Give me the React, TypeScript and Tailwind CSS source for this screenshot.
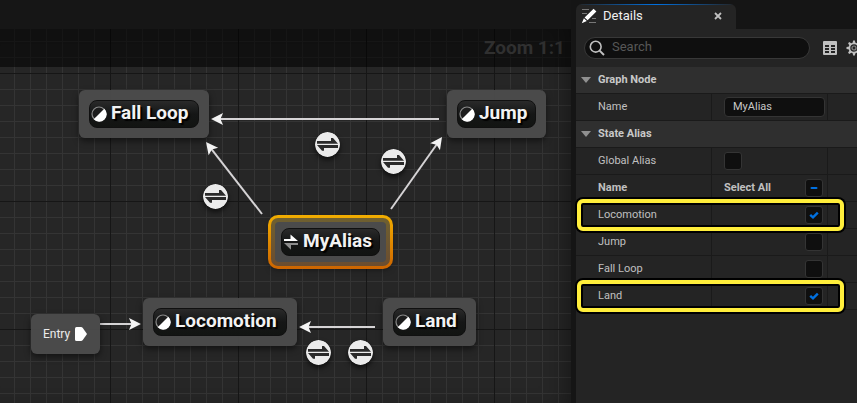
import type { ReactNode } from "react";

const gridStyle =
  "bg-[linear-gradient(to_right,#161616_1px,transparent_1px),linear-gradient(to_bottom,#161616_1px,transparent_1px),linear-gradient(to_right,#343434_1px,transparent_1px),linear-gradient(to_bottom,#343434_1px,transparent_1px)] bg-[size:128px_128px,128px_128px,16px_16px,16px_16px] bg-[position:110px_0px,0px_44px,14px_0px,0px_12px]";

function StateIcon() {
  return (
    <svg className="size-4 shrink-0" viewBox="0 0 16 16" aria-hidden="true">
      <circle cx="8" cy="8" r="7" fill="#1c1c1c" stroke="#8b8b8b" strokeWidth="1.2" />
      <path d="M13.3 2.7A7.5 7.5 0 1 1 2.7 13.3Z" fill="#fff" />
    </svg>
  );
}

function AliasIcon() {
  return (
    <svg className="size-4 shrink-0" viewBox="0 0 16 16" aria-hidden="true">
      <path d="M1 5H7.5V0.5L15 7H1Z" fill="#fff" />
      <path d="M15 9V11H8V15.7L1 9Z" fill="#8d8d8d" />
    </svg>
  );
}

function StateNode({
  title,
  className,
  icon = <StateIcon />,
  selected = false,
}: {
  title: string;
  className: string;
  icon?: ReactNode;
  selected?: boolean;
}) {
  return (
    <div className={`absolute h-12 rounded-md bg-[#4c4c4c]/95 p-[10px] shadow-[0_3px_6px_rgba(0,0,0,0.5)] ${className}`}>
      {selected && (
        <div className="absolute -inset-[3px] rounded-[10px] bg-linear-to-b from-[#f2ae00] to-[#cc6400] p-[3px]">
          <div className="size-full rounded-[7px] bg-linear-to-b from-[#6f6030] to-[#6b4d30] p-1">
            <div className="size-full rounded-[4px] bg-[#4b4b4b]" />
          </div>
        </div>
      )}
      <div className="relative flex h-7 items-center gap-1 rounded-lg border border-[#101010] bg-linear-to-b from-[#2a2a2a] via-[#151616] to-[#121412] pl-px">
        {icon}
        <span className="-mt-[2px] text-[19px] leading-6 font-bold whitespace-nowrap text-[#f2f2f2] [text-shadow:2px_2px_1px_#000]">
          {title}
        </span>
      </div>
    </div>
  );
}

const links = [
  { from: [439, 90], to: [211, 90] },
  { from: [262, 185], to: [206, 113] },
  { from: [391, 180], to: [442, 108] },
  { from: [100, 295], to: [141, 295] },
  { from: [375, 298], to: [299, 298] },
];

function Links() {
  return (
    <svg className="pointer-events-none absolute inset-0 size-full" aria-hidden="true">
      {links.map(({ from, to }, i) => {
        const dx = to[0] - from[0];
        const dy = to[1] - from[1];
        const length = Math.hypot(dx, dy);
        const angle = (Math.atan2(dy, dx) * 180) / Math.PI;
        return (
          <g key={i} transform={`translate(${to[0]} ${to[1]}) rotate(${angle})`}>
            <path d={`M${-length} 0H-8`} stroke="#d5d3d5" strokeWidth="2" />
            <path d="M0 0L-12 -6L-9.5 0L-12 6Z" fill="#f4f4f4" />
          </g>
        );
      })}
    </svg>
  );
}

function Transition({ className }: { className: string }) {
  return (
    <svg
      className={`absolute size-[25px] rounded-full shadow-[0_3px_5px_rgba(0,0,0,0.6)] ${className}`}
      viewBox="0 0 25 25"
      role="img"
      aria-label="Transition"
    >
      <circle cx="12.5" cy="12.5" r="12.5" fill="#ebebeb" />
      <path d="M2 9H16V6H18L23 11.8H2Z" fill="#2a2a2a" />
      <path d="M2 13H23V16H9V18.7H7L2 13Z" fill="#2a2a2a" />
    </svg>
  );
}

function Graph() {
  return (
    <main className={`relative min-h-0 flex-1 overflow-hidden bg-[#262626] ${gridStyle}`}>
      <div className="flex h-[38px] items-center justify-end bg-black/55 pr-[6px]">
        <span className="text-[19px] leading-6 font-bold text-[#303030]">Zoom 1:1</span>
      </div>
      <div className="pointer-events-none absolute inset-0 shadow-[inset_-16px_0_24px_-12px_rgba(0,0,0,0.4)]" />
      <Links />
      <StateNode title="Fall Loop" className="left-[79px] top-[61px] w-[130px]" />
      <StateNode title="Jump" className="left-[447px] top-[61px] w-[99px]" />
      <StateNode title="MyAlias" className="left-[271px] top-[189px] w-[119px]" icon={<AliasIcon />} selected />
      <StateNode title="Locomotion" className="left-[143px] top-[269px] w-[154px]" />
      <StateNode title="Land" className="left-[383px] top-[269px] w-[93px]" />
      <div className="absolute left-[31px] top-[285px] flex h-10 w-[69px] items-center gap-[5px] rounded-md bg-[#4c4c4c]/95 pl-3 shadow-[0_3px_6px_rgba(0,0,0,0.5)]">
        <span className="text-xs text-[#ececec]">Entry</span>
        <svg className="h-[14px] w-3" viewBox="0 0 12 14" aria-hidden="true">
          <path d="M0 1.5Q0 0 1.5 0H6Q7 0 7.8 1L12 7L7.8 13Q7 14 6 14H1.5Q0 14 0 12.5Z" fill="#fff" />
        </svg>
      </div>
      <Transition className="left-[315px] top-[103px]" />
      <Transition className="left-[381px] top-[120px]" />
      <Transition className="left-[203px] top-[155px]" />
      <Transition className="left-[306px] top-[311px]" />
      <Transition className="left-[348px] top-[311px]" />
    </main>
  );
}

function Check({ label, state = "off" }: { label: string; state?: "off" | "on" | "mixed" }) {
  return (
    <span className="relative block size-[18px]">
      <input
        type="checkbox"
        aria-label={label}
        defaultChecked={state === "on"}
        className="block size-[18px] appearance-none rounded-[3px] border border-[#343434] bg-[#0f0f0f]"
      />
      <svg
        className="pointer-events-none absolute inset-0 size-full"
        viewBox="0 0 18 18"
        fill="none"
        stroke="#0070e0"
        strokeWidth="2.4"
        aria-hidden="true"
      >
        {state === "on" && <path d="M5.2 8.8L8 11.4L12.8 6.6" />}
        {state === "mixed" && <path d="M6.5 9H11.5" strokeLinecap="round" strokeWidth="2" />}
      </svg>
    </span>
  );
}

function SectionHeader({ title }: { title: string }) {
  return (
    <h2 className="flex h-[27px] items-center border-b border-[#1a1a1a] bg-[#2f2f2f] pl-[5px] text-[11px] font-bold text-[#c8c8c8]">
      <button type="button" className="flex items-center gap-[7px]">
        <svg className="h-[6px] w-[10px]" viewBox="0 0 10 6" aria-hidden="true">
          <path d="M0 0H10L5 6Z" fill="#909090" />
        </svg>
        {title}
      </button>
    </h2>
  );
}

function Row({ label, bold = false, highlighted = false, children }: {
  label: string;
  bold?: boolean;
  highlighted?: boolean;
  children: ReactNode;
}) {
  return (
    <div className={`relative flex h-[27px] border-b border-[#1a1a1a] text-[11px] text-[#c0c0c0] ${bold ? "font-bold" : ""}`}>
      <div className="flex flex-1 items-center border-r border-[#1a1a1a] pl-[22px]">{label}</div>
      <div className="flex w-[116px] items-center border-r border-[#1a1a1a] pl-3 pr-1">{children}</div>
      <div className="w-[29px]" />
      {highlighted && (
        <div className="pointer-events-none absolute -top-[3px] right-[13px] -bottom-[3px] left-px z-10 rounded-md border-4 border-[#ffee3b] shadow-[0_0_0_2px_#000,inset_0_0_0_2px_#000]" />
      )}
    </div>
  );
}

const aliases = [
  { name: "Locomotion", on: true },
  { name: "Jump", on: false },
  { name: "Fall Loop", on: false },
  { name: "Land", on: true },
];

const gearTeeth = [0, 45, 90, 135, 180, 225, 270, 315];

function Details() {
  return (
    <aside className="flex w-[281px] shrink-0 flex-col">
      <div className="flex h-[29px] items-end">
        <div className="relative flex h-[25px] w-[160px] items-center overflow-hidden rounded-t-md bg-[#242424] pl-[5px] pr-[13px] pb-[2px]">
          <div className="absolute inset-x-0 top-0 h-px bg-linear-to-r from-transparent via-[#0070e0] to-transparent" />
          <svg className="size-4" viewBox="0 0 16 16" aria-hidden="true">
            <path d="M1 1.5H8M1 5.5H6M11 10.5H15M8 14.5H15" stroke="#777" strokeWidth="1.2" />
            <path d="M12.6 0.8L15.4 3.4L6.6 12.2L3.6 9.4ZM2.9 10.2L5.8 13L0.8 15.2Z" fill="#fff" />
          </svg>
          <span className="ml-[6px] flex-1 text-[13px] leading-4 text-[#f0f0f0]">Details</span>
          <button type="button" aria-label="Close Details" className="flex size-[10px] items-center justify-center">
            <svg className="size-2" viewBox="0 0 8 8" aria-hidden="true">
              <path d="M1 1L7 7M7 1L1 7" stroke="#c0c0c0" strokeWidth="1.8" />
            </svg>
          </button>
        </div>
      </div>
      <div className="flex-1 bg-[#242424]">
        <div className="flex h-[38px] items-center overflow-hidden pl-2">
          <label className="flex h-[22px] min-w-0 flex-1 items-center rounded-full border border-[#383838] bg-[#0f0f0f] pl-1">
            <svg className="size-4 shrink-0" viewBox="0 0 16 16" fill="none" stroke="#c0c0c0" strokeWidth="1.6" aria-hidden="true">
              <circle cx="6.7" cy="6.7" r="5.4" />
              <path d="M10.6 10.6L15 15" strokeWidth="2" />
            </svg>
            <input
              type="search"
              aria-label="Search"
              placeholder="Search"
              className="ml-[7px] w-full min-w-0 bg-transparent pb-[2px] text-[13px] text-[#c0c0c0] outline-none placeholder:text-[#575757]"
            />
          </label>
          <button type="button" aria-label="Property matrix" className="ml-[13px]">
            <svg className="block size-[14px]" viewBox="0 0 14 14" aria-hidden="true">
              <path
                fillRule="evenodd"
                d="M1 0H13Q14 0 14 1V13Q14 14 13 14H1Q0 14 0 13V1Q0 0 1 0ZM2 4V6H6V4ZM8 4V6H12V4ZM2 7V9H6V7ZM8 7V9H12V7ZM2 10V12H6V10ZM8 10V12H12V10Z"
                fill="#c0c0c0"
              />
            </svg>
          </button>
          <button type="button" aria-label="Settings" className="ml-[9px] w-[11px] overflow-hidden">
            <svg className="block size-4 max-w-none" viewBox="0 0 16 16" aria-hidden="true">
              <circle cx="8" cy="8" r="4.6" fill="none" stroke="#c0c0c0" strokeWidth="1.7" />
              <circle cx="8" cy="8" r="2" fill="none" stroke="#858585" strokeWidth="1.2" />
              {gearTeeth.map((a) => (
                <path key={a} d="M6.5 3.5L7.1 0.5H8.9L9.5 3.5Z" fill="#c0c0c0" transform={`rotate(${a} 8 8)`} />
              ))}
            </svg>
          </button>
        </div>
        <SectionHeader title="Graph Node" />
        <Row label="Name">
          <input
            type="text"
            aria-label="Name"
            defaultValue="MyAlias"
            className="h-5 w-[101px] rounded-[4px] border border-[#343434] bg-[#0f0f0f] px-2 pb-[2px] text-[11px] text-[#c8c8c8] outline-none"
          />
        </Row>
        <SectionHeader title="State Alias" />
        <Row label="Global Alias">
          <Check label="Global Alias" />
        </Row>
        <Row label="Name" bold>
          <span className="flex-1">Select All</span>
          <Check label="Select All" state="mixed" />
        </Row>
        {aliases.map(({ name, on }) => (
          <Row key={name} label={name} highlighted={on}>
            <span className="flex-1" />
            <Check label={name} state={on ? "on" : "off"} />
          </Row>
        ))}
      </div>
    </aside>
  );
}

export default function App() {
  return (
    <div className="flex h-screen gap-[5px] bg-[#151515] font-['Roboto',sans-serif]">
      <div className="flex min-w-0 flex-1 flex-col">
        <header className="h-[29px] shrink-0 bg-[#161616]" />
        <Graph />
      </div>
      <Details />
    </div>
  );
}
